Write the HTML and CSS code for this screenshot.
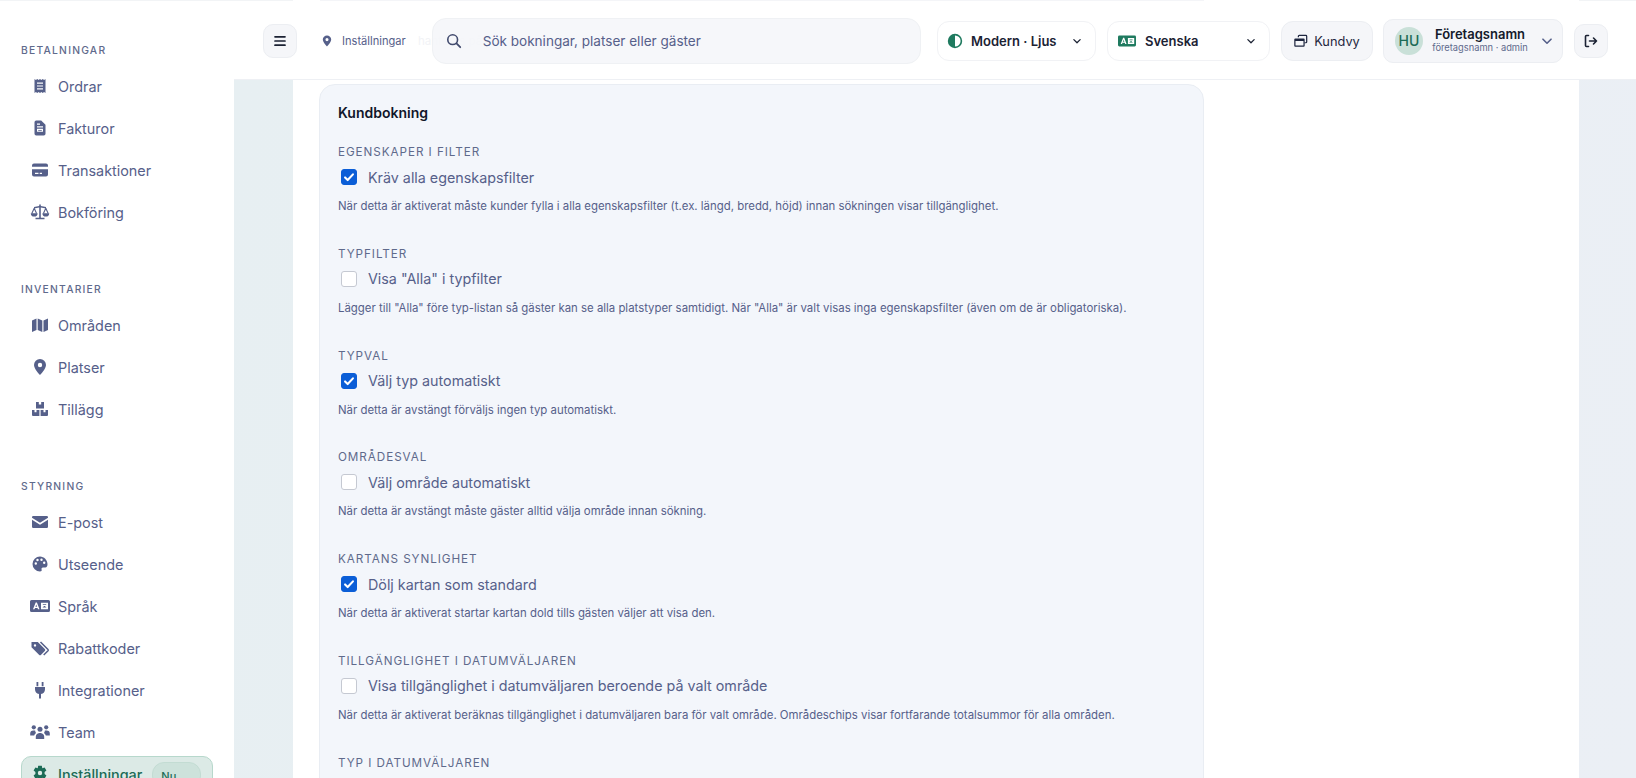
FILE: index.html
```html
<!DOCTYPE html>
<html lang="sv">
<head>
  <meta charset="UTF-8">
  <meta name="viewport" content="width=device-width, initial-scale=1.0">
  <title>Inställningar</title>
  <link rel="stylesheet" href="styles.css">
</head>
<body>

  <!-- Icon sprite -->
  <svg class="sprite" xmlns="http://www.w3.org/2000/svg">
    <symbol id="i-receipt" viewBox="0 0 20 20"><path fill-rule="evenodd" d="M4.500 3l1.400 1 1.400-1 1.300 1 1.400-1 1.400 1 1.300-1 1.400 1 1.400-1v14l-1.400-1-1.400 1-1.300-1-1.400 1-1.400-1-1.300 1-1.400-1-1.400 1zM7 6.600v1.200h6V6.600zM7 9.400v1.200h6V9.400zM7 12.200v1.200h6v-1.200z"/></symbol>
    <symbol id="i-file" viewBox="0 0 20 20"><path fill-rule="evenodd" d="M6.200 2.500h5l4.300 4.300v9a1.700 1.700 0 0 1-1.700 1.700H6.200a1.700 1.700 0 0 1-1.700-1.700V4.200a1.700 1.700 0 0 1 1.700-1.700zM7 5.500v1.200h3V5.500zM7 8.200v1.200h6V8.200zM7 10.800v3h6v-3zM8.200 11.900h3.600v.9H8.200z"/></symbol>
    <symbol id="i-card" viewBox="0 0 20 20"><path fill-rule="evenodd" d="M2 5.500a2 2 0 0 1 2-2h12a2 2 0 0 1 2 2v1.300H2zM2 9.200h16v5.300a2 2 0 0 1-2 2H4a2 2 0 0 1-2-2zM5 12.800v1.100h3.500v-1.100zM9.700 12.800v1.100h2.300v-1.100z"/></symbol>
    <symbol id="i-scale" viewBox="0 0 20 20"><path d="M9.200 2.500h1.600v1.600l5.200 1v1.400l-5.200-1V15.800h3.700v1.400H5.500v-1.400h3.700V5.500l-5.200 1V5.100l5.200-1z"/><path fill="none" stroke="currentColor" stroke-width="1.100" d="M4.200 6.200L1.800 11.500M4.200 6.200l2.400 5.300M15.800 6.200l-2.400 5.300M15.800 6.200l2.400 5.300"/><path d="M.8 11.200h6.800a3.400 3.400 0 0 1-6.800 0zM12.400 11.200h6.800a3.400 3.400 0 0 1-6.800 0z"/></symbol>
    <symbol id="i-map" viewBox="0 0 20 20"><path d="M2 5.500L6.500 3.500V15L2 17zM7.700 3.500L12.300 5.500V17L7.700 15zM13.500 5.500L18 3.500V15L13.500 17z"/></symbol>
    <symbol id="i-pin" viewBox="0 0 20 20"><path fill-rule="evenodd" d="M10 2a6 6 0 0 0-6 6c0 4 6 10 6 10s6-6 6-10a6 6 0 0 0-6-6zM10 5.800a2.200 2.200 0 1 1 0 4.400 2.200 2.200 0 0 1 0-4.400z"/></symbol>
    <symbol id="i-boxes" viewBox="0 0 20 20"><path d="M6 3h2.800v2.500h2.400V3H14v6.500H6zM2 11h2.500v2.300h2V11h2.900v6H3a1 1 0 0 1-1-1zM10.600 11h2.900v2.300h2V11H18v5a1 1 0 0 1-1 1h-6.400z"/></symbol>
    <symbol id="i-mail" viewBox="0 0 20 20"><path d="M3.200 4h13.600A1.200 1.200 0 0 1 18 5.200v.6l-8 4.900-8-4.900v-.6A1.200 1.200 0 0 1 3.200 4zM2 7.800l8 4.900 8-4.900v7A1.200 1.200 0 0 1 16.800 16H3.200A1.200 1.200 0 0 1 2 14.800z"/></symbol>
    <symbol id="i-palette" viewBox="0 0 20 20"><path fill-rule="evenodd" d="M10 2.500a7.500 7.500 0 1 0 0 15c1.400 0 2-1 1.600-2-.4-1 .2-2 1.400-2h2.200c1.600 0 2.300-1.200 2.300-3.200 0-4.200-3.500-7.800-7.500-7.800zM5.800 8.300a1.200 1.200 0 1 1 0 2.400 1.200 1.200 0 0 1 0-2.400zM7.500 4.800a1.200 1.200 0 1 1 0 2.400 1.200 1.200 0 0 1 0-2.400zM11.500 4.500a1.200 1.200 0 1 1 0 2.400 1.200 1.200 0 0 1 0-2.400zM14.200 7.500a1.200 1.200 0 1 1 0 2.400 1.200 1.200 0 0 1 0-2.400z"/></symbol>
    <symbol id="i-lang" viewBox="0 0 20 20"><path fill-rule="evenodd" d="M1.500 4h17A1.500 1.500 0 0 1 20 5.500v9a1.500 1.500 0 0 1-1.500 1.500h-17A1.500 1.500 0 0 1 0 14.500v-9A1.500 1.500 0 0 1 1.500 4zM5.700 6.500L3 13.300h1.500l.5-1.400h2.500l.5 1.400h1.500L6.900 6.500zM6.250 8.500l.8 2.200H5.450zM11 6.800v6.400h7V6.800zM12.800 8.200v.9h3.400v-.9zM13.600 10v.9h1.800V10zM12.800 11.500v.5h3.400v-.5z"/></symbol>
    <symbol id="i-tags" viewBox="0 0 20 20"><path fill-rule="evenodd" d="M1.500 4h6.300l7 7a1.500 1.500 0 0 1 0 2.100l-3.700 3.700a1.500 1.500 0 0 1-2.100 0l-7.500-7.500zM5 6.200a1.200 1.200 0 1 0 0 2.400 1.200 1.200 0 0 0 0-2.400z"/><path fill="none" stroke="currentColor" stroke-width="1.500" d="M10.500 4l7.500 7.500a1 1 0 0 1 0 1.300l-4.300 4.200"/></symbol>
    <symbol id="i-plug" viewBox="0 0 20 20"><path d="M6.500 2h1.800v4.200H6.500zM11.700 2h1.800v4.200h-1.800zM5 7h10v2.200a5 5 0 0 1-4 4.800V18.500H9V14a5 5 0 0 1-4-4.800z"/></symbol>
    <symbol id="i-team" viewBox="0 0 20 20"><circle cx="10" cy="7.200" r="2.500"/><circle cx="3.800" cy="5.300" r="2.100"/><circle cx="16.200" cy="5.300" r="2.100"/><path d="M5.800 17v-2.200a4 4 0 0 1 3.500-3.800h1.400a4 4 0 0 1 3.500 3.800V17zM.2 12a3.300 3.300 0 0 1 3.200-3.500h1.800a3.600 3.600 0 0 0 .9 2.600 5 5 0 0 0-1.900 2.400H.2zM19.800 12a3.300 3.300 0 0 0-3.200-3.500h-1.800a3.600 3.600 0 0 1-.9 2.600 5 5 0 0 1 1.900 2.400h4z"/></symbol>
    <symbol id="i-gear" viewBox="0 0 20 20"><path fill-rule="evenodd" d="M8.200 1.800h3.600l.5 2.400 2.300-.8 1.800 3.100-1.800 1.600v1.800l1.800 1.600-1.800 3.100-2.300-.8-.5 2.400H8.200l-.5-2.400-2.300.8-1.800-3.100 1.800-1.600V8.100L3.600 6.500l1.800-3.100 2.300.8zM10 6.800a2.200 2.200 0 1 0 0 4.400 2.200 2.200 0 0 0 0-4.400z"/></symbol>
    <symbol id="i-half" viewBox="0 0 20 20"><path fill-rule="evenodd" d="M10 1a9 9 0 1 1 0 18 9 9 0 0 1 0-18zM10 3v14a7 7 0 0 0 0-14z"/></symbol>
    <symbol id="i-chevron" viewBox="0 0 20 20"><path fill="none" stroke="currentColor" stroke-width="1.800" stroke-linecap="round" stroke-linejoin="round" d="M5.500 8l4.500 4.500L14.500 8"/></symbol>
  </svg>

  <div class="top-hairline"></div>

  <div class="app">
    <!-- Sidebar -->
    <aside class="sidebar">
      <div class="nav-group">
        <div class="nav-title">BETALNINGAR</div>
        <a class="nav-item"><svg class="ico"><use href="#i-receipt"></use></svg>Ordrar</a>
        <a class="nav-item"><svg class="ico"><use href="#i-file"></use></svg>Fakturor</a>
        <a class="nav-item"><svg class="ico"><use href="#i-card"></use></svg>Transaktioner</a>
        <a class="nav-item"><svg class="ico"><use href="#i-scale"></use></svg>Bokföring</a>
      </div>
      <div class="nav-group">
        <div class="nav-title">INVENTARIER</div>
        <a class="nav-item"><svg class="ico"><use href="#i-map"></use></svg>Områden</a>
        <a class="nav-item"><svg class="ico"><use href="#i-pin"></use></svg>Platser</a>
        <a class="nav-item"><svg class="ico"><use href="#i-boxes"></use></svg>Tillägg</a>
      </div>
      <div class="nav-group">
        <div class="nav-title">STYRNING</div>
        <a class="nav-item"><svg class="ico"><use href="#i-mail"></use></svg>E-post</a>
        <a class="nav-item"><svg class="ico"><use href="#i-palette"></use></svg>Utseende</a>
        <a class="nav-item"><svg class="ico"><use href="#i-lang"></use></svg>Språk</a>
        <a class="nav-item"><svg class="ico"><use href="#i-tags"></use></svg>Rabattkoder</a>
        <a class="nav-item"><svg class="ico"><use href="#i-plug"></use></svg>Integrationer</a>
        <a class="nav-item"><svg class="ico"><use href="#i-team"></use></svg>Team</a>
        <a class="nav-item active"><svg class="ico"><use href="#i-gear"></use></svg>Inställningar<span class="now-badge">Nu</span></a>
      </div>
    </aside>

    <div class="main">
      <!-- Header -->
      <header class="topbar">
        <span class="ghost-text">hanteras på</span>
        <button class="icon-btn">
          <svg width="14" height="14" viewBox="0 0 14 14"><path fill="none" stroke="currentColor" stroke-width="1.700" stroke-linecap="round" d="M2 2.800h10M2 7h10M2 11.200h10"/></svg>
        </button>
        <div class="crumb"><svg class="crumb-pin"><use href="#i-pin"></use></svg>Inställningar</div>
        <div class="search">
          <svg width="16" height="16" viewBox="0 0 18 18"><circle cx="7.500" cy="7.500" r="5.500" fill="none" stroke="currentColor" stroke-width="1.800"/><path stroke="currentColor" stroke-width="2" stroke-linecap="round" d="M11.800 11.800l4.200 4.200"/></svg>
          <span>Sök bokningar, platser eller gäster</span>
        </div>
        <div class="select select-theme">
          <svg class="select-ico"><use href="#i-half"></use></svg>
          <span class="select-label">Modern · Ljus</span>
          <svg class="chev"><use href="#i-chevron"></use></svg>
        </div>
        <div class="select select-lang">
          <svg class="select-ico lang-ico"><use href="#i-lang"></use></svg>
          <span class="select-label">Svenska</span>
          <svg class="chev"><use href="#i-chevron"></use></svg>
        </div>
        <div class="customer-view">
          <svg width="14" height="14" viewBox="0 0 16 16"><path fill="none" stroke="currentColor" stroke-width="1.400" d="M5 3.800V2.500a1 1 0 0 1 1-1h7.500a1 1 0 0 1 1 1V9a1 1 0 0 1-1 1H12"/><path fill="currentColor" d="M1.500 5h9.500a1.200 1.200 0 0 1 1.200 1.200v7.100a1.200 1.200 0 0 1-1.200 1.200H1.500A1.200 1.200 0 0 1 .3 13.300V6.200A1.200 1.200 0 0 1 1.500 5zM1.700 8v5.100h9.100V8z" fill-rule="evenodd"/></svg>
          Kundvy
        </div>
        <div class="user-box">
          <div class="avatar">HU</div>
          <div class="user-text">
            <div class="user-name">Företagsnamn</div>
            <div class="user-sub">företagsnamn · admin</div>
          </div>
          <svg class="user-chev"><use href="#i-chevron"></use></svg>
        </div>
        <button class="icon-btn">
          <svg width="16" height="16" viewBox="0 0 16 16"><path fill="none" stroke="currentColor" stroke-width="1.600" stroke-linecap="round" stroke-linejoin="round" d="M5.500 2.500H3.500a1 1 0 0 0-1 1v9a1 1 0 0 0 1 1h2M6.500 8h7M10.500 5l3 3-3 3"/></svg>
        </button>
      </header>

      <!-- Page content -->
      <div class="content">
        <div class="panel">
          <section class="card">
            <h2 class="card-title">Kundbokning</h2>

            <div class="setting">
              <div class="setting-label">EGENSKAPER I FILTER</div>
              <label class="check-row"><input type="checkbox" checked>Kräv alla egenskapsfilter</label>
              <p class="help">När detta är aktiverat måste kunder fylla i alla egenskapsfilter (t.ex. längd, bredd, höjd) innan sökningen visar tillgänglighet.</p>
            </div>

            <div class="setting">
              <div class="setting-label">TYPFILTER</div>
              <label class="check-row"><input type="checkbox">Visa "Alla" i typfilter</label>
              <p class="help">Lägger till "Alla" före typ-listan så gäster kan se alla platstyper samtidigt. När "Alla" är valt visas inga egenskapsfilter (även om de är obligatoriska).</p>
            </div>

            <div class="setting">
              <div class="setting-label">TYPVAL</div>
              <label class="check-row"><input type="checkbox" checked>Välj typ automatiskt</label>
              <p class="help">När detta är avstängt förväljs ingen typ automatiskt.</p>
            </div>

            <div class="setting">
              <div class="setting-label">OMRÅDESVAL</div>
              <label class="check-row"><input type="checkbox">Välj område automatiskt</label>
              <p class="help">När detta är avstängt måste gäster alltid välja område innan sökning.</p>
            </div>

            <div class="setting">
              <div class="setting-label">KARTANS SYNLIGHET</div>
              <label class="check-row"><input type="checkbox" checked>Dölj kartan som standard</label>
              <p class="help">När detta är aktiverat startar kartan dold tills gästen väljer att visa den.</p>
            </div>

            <div class="setting">
              <div class="setting-label">TILLGÄNGLIGHET I DATUMVÄLJAREN</div>
              <label class="check-row"><input type="checkbox">Visa tillgänglighet i datumväljaren beroende på valt område</label>
              <p class="help">När detta är aktiverat beräknas tillgänglighet i datumväljaren bara för valt område. Områdeschips visar fortfarande totalsummor för alla områden.</p>
            </div>

            <div class="setting">
              <div class="setting-label">TYP I DATUMVÄLJAREN</div>
            </div>
          </section>
        </div>
      </div>
    </div>
  </div>

</body>
</html>
```

FILE: styles.css
```css
/* General page */
body {
  margin: 0;
  height: 778px;
  overflow: hidden;
  font-family: 'Inter', 'Liberation Sans', sans-serif;
  color: #56608a;
  background-color: #fff;
}

.sprite {
  display: none;
}

.top-hairline {
  position: absolute;
  top: 0;
  left: 0;
  width: 100%;
  height: 1px;
  z-index: 5;
  background: linear-gradient(to right, #f2f4f6 293px, #fff 293px, #fff 320px, #f4f5f8 320px, #f4f5f8 1204px, #fff 1204px, #fff 1579px, #f2f4f6 1579px);
}

.app {
  display: flex;
  height: 778px;
}

/* Sidebar */
.sidebar {
  width: 234px;
  flex-shrink: 0;
  padding: 43px 21px 0;
  box-sizing: border-box;
  background-color: #fff;
  overflow: hidden;
}

.nav-group {
  display: flex;
  flex-direction: column;
  gap: 6px;
  margin-bottom: 52px;
}

.nav-title {
  height: 15px;
  line-height: 15px;
  margin-bottom: 4px;
  font-size: 10.3px;
  font-weight: 500;
  letter-spacing: 0.12em;
  color: #5f6a8c;
}

.nav-item {
  display: flex;
  align-items: center;
  flex-shrink: 0;
  height: 36px;
  padding-left: 9px;
  gap: 8px;
  font-size: 14.4px;
  color: #56608a;
  border-radius: 10px;
  box-sizing: border-box;
}

.ico {
  width: 20px;
  height: 20px;
  fill: currentColor;
  flex-shrink: 0;
}

.nav-item.active {
  background-color: #dceae6;
  border: 1px solid #b7d8cc;
  padding-left: 8px;
  color: #1c6b56;
  font-weight: 500;
}

.now-badge {
  display: inline-block;
  width: 49px;
  height: 26px;
  line-height: 26px;
  padding-left: 8px;
  margin-left: 2px;
  margin-top: 2px;
  box-sizing: border-box;
  font-size: 11px;
  border-radius: 12px;
  background-color: #cde2db;
  border: 1px solid #c3dcd3;
}

/* Main column */
.main {
  flex: 1;
  display: flex;
  flex-direction: column;
  min-width: 0;
}

.topbar {
  position: relative;
  display: flex;
  align-items: center;
  gap: 11px;
  height: 80px;
  flex-shrink: 0;
  padding: 3px 28px 0 29px;
  box-sizing: border-box;
  background-color: #fff;
  border-bottom: 1px solid #eef0f4;
}

.ghost-text {
  position: absolute;
  left: 184px;
  top: 34px;
  font-size: 11.5px;
  color: #f2f3f6;
}

.icon-btn {
  width: 34px;
  height: 34px;
  display: flex;
  align-items: center;
  justify-content: center;
  padding: 0;
  color: #1b2233;
  background-color: #f5f6f9;
  border: 1px solid #eceef2;
  border-radius: 10px;
  flex-shrink: 0;
}

.crumb {
  display: flex;
  align-items: center;
  gap: 8px;
  margin: 0 15px 0 13px;
  font-size: 11.1px;
  color: #56608a;
}

.crumb-pin {
  width: 14px;
  height: 14px;
  fill: currentColor;
  margin-left: -1px;
}

.search {
  position: relative;
  z-index: 1;
  flex: 1;
  height: 44px;
  margin-right: 5px;
  display: flex;
  align-items: center;
  gap: 21px;
  padding-left: 13px;
  font-size: 13.55px;
  color: #56608a;
  background-color: rgba(245, 246, 249, 0.85);
  border: 1px solid #eff1f4;
  border-radius: 14px;
}

.search svg {
  color: #424b6e;
  flex-shrink: 0;
}

.select {
  display: flex;
  align-items: center;
  height: 40px;
  box-sizing: border-box;
  background-color: #fff;
  border: 1px solid #f1f2f5;
  border-radius: 12px;
  flex-shrink: 0;
  color: #1b2233;
}

.select-theme {
  width: 159px;
  padding-left: 9px;
}

.select-theme .select-ico {
  margin-right: 8px;
}

.select-lang {
  width: 163px;
  padding-left: 10px;
}

.select-ico {
  width: 16px;
  height: 16px;
  fill: #1f7a5f;
  margin-right: 9px;
  flex-shrink: 0;
}

.lang-ico {
  width: 18px;
  height: 18px;
}

.select-label {
  font-size: 13px;
  font-weight: 600;
}

.chev {
  width: 14px;
  height: 14px;
  margin-left: auto;
  margin-right: 11px;
}

.customer-view {
  display: flex;
  align-items: center;
  justify-content: center;
  gap: 6px;
  width: 92px;
  height: 40px;
  box-sizing: border-box;
  font-size: 12.8px;
  color: #1f2740;
  background-color: #f5f6f9;
  border: 1px solid #eceef2;
  border-radius: 12px;
  flex-shrink: 0;
}

.user-box {
  display: flex;
  align-items: center;
  width: 180px;
  height: 44px;
  margin-left: -1px;
  padding-left: 11px;
  box-sizing: border-box;
  background-color: #f5f6f9;
  border: 1px solid #eceef2;
  border-radius: 10px;
  flex-shrink: 0;
}

.avatar {
  width: 28px;
  height: 28px;
  border-radius: 50%;
  background-color: #c9e0d8;
  color: #1c6b56;
  font-size: 14px;
  font-weight: 500;
  text-align: center;
  line-height: 28px;
  flex-shrink: 0;
}

.user-text {
  width: 96px;
  margin-left: 9px;
  padding-bottom: 4px;
  text-align: center;
}

.user-name {
  font-size: 13px;
  font-weight: 600;
  line-height: 16px;
  color: #141a2b;
  white-space: nowrap;
}

.user-sub {
  font-size: 9.3px;
  line-height: 11px;
  color: #5f6a8c;
  white-space: nowrap;
}

.user-chev {
  width: 18px;
  height: 18px;
  margin-left: 10px;
  color: #56608a;
}

/* Content */
.content {
  flex: 1;
  padding: 0 57px 0 59px;
  background: linear-gradient(100deg, #e7eff2, #ebeff5);
  overflow: hidden;
}

.panel {
  height: 100%;
  padding: 4px 0 0 26px;
  box-sizing: border-box;
  background-color: #fff;
}

.card {
  width: 885px;
  padding: 18px;
  box-sizing: border-box;
  background-color: #f3f6fb;
  border: 1px solid #e9edf3;
  border-radius: 16px;
}

.card-title {
  margin: 0 0 21px;
  font-size: 14px;
  font-weight: 600;
  line-height: 20px;
  color: #11172a;
}

.setting {
  margin-bottom: 31.8px;
}

.setting-label {
  height: 16px;
  line-height: 16px;
  margin-bottom: 5px;
  font-size: 11.7px;
  letter-spacing: 0.08em;
  color: #5f6a8c;
}

.check-row {
  display: flex;
  align-items: center;
  gap: 11px;
  height: 24px;
  padding-left: 3px;
  margin-bottom: 9px;
  font-size: 14.3px;
  color: #56608a;
}

.check-row input {
  appearance: none;
  width: 16px;
  height: 16px;
  margin: 0;
  background-color: #fff;
  border: 1px solid #c5c9d2;
  border-radius: 3px;
  flex-shrink: 0;
}

.check-row input:checked {
  background-color: #0b5ed7;
  border-color: #0b5ed7;
  background-image: url("data:image/svg+xml,%3Csvg xmlns='http://www.w3.org/2000/svg' viewBox='0 0 16 16'%3E%3Cpath fill='none' stroke='white' stroke-width='2.400' stroke-linecap='round' stroke-linejoin='round' d='M3.500 8.500l3 3 6-6.500'/%3E%3C/svg%3E");
}

.help {
  margin: 0;
  height: 16px;
  line-height: 16px;
  font-size: 11.4px;
  color: #56608a;
  white-space: nowrap;
}
```
